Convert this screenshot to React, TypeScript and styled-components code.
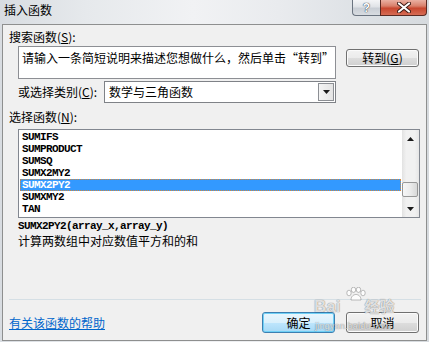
import React from "react";
import styled, { createGlobalStyle } from "styled-components";

const GlobalStyle = createGlobalStyle`
  html, body {
    margin: 0;
    padding: 0;
    background: #ffffff;
  }
  body {
    font-family: "Noto Sans CJK SC", "Liberation Sans", sans-serif;
    font-size: 12px;
    color: #000;
  }
`;

const functions = [
  "SUMIFS",
  "SUMPRODUCT",
  "SUMSQ",
  "SUMX2MY2",
  "SUMX2PY2",
  "SUMXMY2",
  "TAN",
];
const selected = "SUMX2PY2";

const Window = styled.div`
  position: relative;
  width: 429px;
  height: 342px;
  box-sizing: border-box;
  padding: 0 2px 1px 2px;
  display: flex;
  flex-direction: column;
  overflow: hidden;
  background: linear-gradient(
    90deg,
    #d8dce1 0%,
    #e6e9ec 20%,
    #f1f2f4 45%,
    #e9ebee 65%,
    #dde1e5 85%,
    #d6dade 100%
  );
`;

const TitleBar = styled.div`
  height: 24px;
  display: flex;
  align-items: flex-start;
  justify-content: space-between;
`;

const Title = styled.span`
  margin: 3px 0 0 2px;
  font-size: 12px;
  line-height: 14px;
  color: #000;
`;

const Caption = styled.div`
  display: flex;
`;

const HelpButton = styled.div`
  width: 28px;
  height: 16px;
  box-sizing: border-box;
  border: 1px solid #6b7480;
  border-top: none;
  border-right: none;
  border-radius: 0 0 0 4px;
  background: linear-gradient(#f4f5f7 0%, #e0e3e7 45%, #c9ced5 55%, #d8dce1 100%);
  display: flex;
  align-items: center;
  justify-content: center;
  color: #fff;
  font: bold 12px/14px "Liberation Sans", sans-serif;
  text-shadow: 0 0 1px #2c3440, 0 0 1px #2c3440;
`;

const CloseButton = styled.div`
  width: 47px;
  height: 16px;
  box-sizing: border-box;
  border: 1px solid #5a2a22;
  border-top: none;
  border-radius: 0 0 4px 0;
  background: linear-gradient(#eab0a2 0%, #d9806b 40%, #c8472f 55%, #d66c55 100%);
  display: flex;
  align-items: center;
  justify-content: center;
`;

const Panel = styled.div`
  position: relative;
  flex: 1;
  display: flex;
  flex-direction: column;
  box-sizing: border-box;
  border: 1px solid #8e8f8f;
  background: #f0f0f0;
  padding: 0 6px 7px 6px;
`;

const SectionLabel = styled.div<{ $top: number }>`
  margin-top: ${(p) => p.$top}px;
  line-height: 14px;
  white-space: nowrap;
`;

const SearchRow = styled.div`
  display: flex;
  align-items: flex-start;
  gap: 10px;
  margin: 2px 0 0 9px;
`;

const SearchBox = styled.div`
  width: 318px;
  height: 33px;
  box-sizing: border-box;
  border: 1px solid #8d8f94;
  background: #fff;
  padding: 4px 0 0 3px;
  line-height: 14px;
  white-space: nowrap;
  overflow: hidden;
`;

const Button = styled.button<{ $default?: boolean; $height?: number; $top?: number }>`
  width: 73px;
  height: ${(p) => p.$height ?? 21}px;
  margin-top: ${(p) => p.$top ?? 0}px;
  box-sizing: border-box;
  padding: 0;
  border: 1px solid ${(p) => (p.$default ? "#3c7fb1" : "#707070")};
  border-radius: 3px;
  background: ${(p) =>
    p.$default
      ? "linear-gradient(#eaf6fd 0%, #d9f0fc 50%, #bee6fd 51%, #a7d9f5 100%)"
      : "linear-gradient(#f2f2f2 0%, #ebebeb 50%, #dddddd 51%, #cfcfcf 100%)"};
  box-shadow: inset 0 0 0 1px ${(p) => (p.$default ? "#6fd0f6" : "#fbfbfb")};
  font: 12px/14px "Noto Sans CJK SC", "Liberation Sans", sans-serif;
  color: #000;
  display: flex;
  align-items: center;
  justify-content: center;
`;

const CategoryRow = styled.div`
  display: flex;
  align-items: center;
  margin: 2px 0 0 9px;
`;

const CategoryLabel = styled.span`
  width: 86px;
  line-height: 14px;
  white-space: nowrap;
`;

const Select = styled.div`
  width: 232px;
  height: 22px;
  box-sizing: border-box;
  border: 1px solid #7f8287;
  background: #fff;
  display: flex;
  align-items: stretch;
  padding: 1px;
`;

const SelectValue = styled.span`
  flex: 1;
  padding-left: 3px;
  line-height: 18px;
`;

const DropButton = styled.span`
  width: 16px;
  box-sizing: border-box;
  border: 1px solid #8c8f94;
  background: linear-gradient(90deg, #f4f4f4, #e4e4e4);
  display: flex;
  align-items: center;
  justify-content: center;
`;

const ListBox = styled.div`
  margin: 5px 0 0 9px;
  width: 402px;
  height: 89px;
  box-sizing: border-box;
  border: 1px solid #828790;
  background: #fff;
  display: flex;
`;

const Rows = styled.div`
  flex: 1;
  padding: 1px;
`;

const Row = styled.div<{ $active?: boolean }>`
  height: 12px;
  line-height: 12px;
  padding-left: 2px;
  font-family: "Liberation Mono", monospace;
  font-size: 11px;
  font-weight: bold;
  letter-spacing: -0.6px;
  white-space: nowrap;
  color: ${(p) => (p.$active ? "#fff" : "#000")};
  background: ${(p) => (p.$active ? "#3399ff" : "transparent")};
  outline: ${(p) => (p.$active ? "1px dotted #d2873a" : "none")};
  outline-offset: -1px;
`;

const ScrollBar = styled.div`
  width: 17px;
  display: flex;
  flex-direction: column;
  background: linear-gradient(90deg, #e2e2e2 0%, #f1f1f1 25%, #f1f1f1 75%, #e6e6e6 100%);
`;

const ScrollArrow = styled.div`
  height: 17px;
  display: flex;
  align-items: center;
  justify-content: center;
`;

const ScrollTrack = styled.div`
  flex: 1;
`;

const Thumb = styled.div<{ $offset: number }>`
  margin: ${(p) => p.$offset}px 1px 0 0;
  height: 15px;
  box-sizing: border-box;
  border: 1px solid #979797;
  border-radius: 2px;
  background: linear-gradient(90deg, #f6f6f6 0%, #ececec 50%, #d8d8d8 100%);
`;

const Syntax = styled.div`
  margin: 2px 0 0 9px;
  line-height: 12px;
  font-family: "Liberation Mono", monospace;
  font-size: 11px;
  font-weight: bold;
  letter-spacing: -0.6px;
  white-space: nowrap;
`;

const Description = styled.div`
  margin: 2px 0 0 9px;
  line-height: 14px;
  white-space: nowrap;
`;

const Separator = styled.div`
  margin-top: auto;
  margin-bottom: 12px;
  width: 412px;
  height: 1px;
  background: #d5dfe5;
`;

const Footer = styled.div`
  display: flex;
  align-items: center;
  gap: 11px;
  padding-right: 1px;
`;

const HelpLink = styled.a`
  margin-right: auto;
  color: #0066cc;
  text-decoration: underline;
  line-height: 14px;
  cursor: pointer;
`;

const Watermark = styled.div`
  position: absolute;
  left: 309px;
  top: 262px;
  width: 92px;
  height: 44px;
  pointer-events: none;
  color: rgba(255, 255, 255, 0.8);
  text-shadow: 0 0 1px rgba(0, 0, 0, 0.4), 0 0 1px rgba(0, 0, 0, 0.3);
`;

const MarkBrand = styled.div`
  position: absolute;
  top: 10px;
  left: 2px;
  font: bold 17px/18px "Liberation Sans", sans-serif;
  white-space: nowrap;
`;

const MarkCn = styled.span`
  margin-left: 24px;
  font: bold 15px/18px "Noto Sans CJK SC", sans-serif;
`;

const MarkUrl = styled.div`
  position: absolute;
  top: 34px;
  left: 3px;
  font: 9px/10px "Liberation Sans", sans-serif;
  letter-spacing: 0.2px;
  white-space: nowrap;
`;

const MarkPaw = styled.svg`
  position: absolute;
  left: 33px;
  top: 0;
`;

function Triangle({ up }: { up?: boolean }) {
  return (
    <svg width="7" height="4" viewBox="0 0 7 4">
      <polygon points={up ? "0,4 7,4 3.5,0" : "0,0 7,0 3.5,4"} fill="#1a1a1a" />
    </svg>
  );
}

export default function App() {
  return (
    <>
      <GlobalStyle />
      <Window>
        <TitleBar>
          <Title>插入函数</Title>
          <Caption>
            <HelpButton>?</HelpButton>
            <CloseButton>
              <svg width="14" height="11" viewBox="0 0 14 11">
                <path
                  d="M2 1.5 L12 9.5 M12 1.5 L2 9.5"
                  stroke="#3b1a14"
                  strokeWidth="4"
                  strokeLinecap="round"
                />
                <path
                  d="M2 1.5 L12 9.5 M12 1.5 L2 9.5"
                  stroke="#ffffff"
                  strokeWidth="2.2"
                  strokeLinecap="round"
                />
              </svg>
            </CloseButton>
          </Caption>
        </TitleBar>
        <Panel>
          <SectionLabel $top={5}>
            搜索函数(<u>S</u>):
          </SectionLabel>
          <SearchRow>
            <SearchBox>请输入一条简短说明来描述您想做什么，然后单击“转到”</SearchBox>
            <Button $height={18} $top={3}>
              转到(<u>G</u>)
            </Button>
          </SearchRow>
          <CategoryRow>
            <CategoryLabel>
              或选择类别(<u>C</u>):
            </CategoryLabel>
            <Select>
              <SelectValue>数学与三角函数</SelectValue>
              <DropButton>
                <Triangle />
              </DropButton>
            </Select>
          </CategoryRow>
          <SectionLabel $top={7}>
            选择函数(<u>N</u>):
          </SectionLabel>
          <ListBox>
            <Rows>
              {functions.map((name) => (
                <Row key={name} $active={name === selected}>
                  {name}
                </Row>
              ))}
            </Rows>
            <ScrollBar>
              <ScrollArrow>
                <Triangle up />
              </ScrollArrow>
              <ScrollTrack>
                <Thumb $offset={35} />
              </ScrollTrack>
              <ScrollArrow>
                <Triangle />
              </ScrollArrow>
            </ScrollBar>
          </ListBox>
          <Syntax>SUMX2PY2(array_x,array_y)</Syntax>
          <Description>计算两数组中对应数值平方和的和</Description>
          <Separator />
          <Footer>
            <HelpLink>有关该函数的帮助</HelpLink>
            <Button $default>确定</Button>
            <Button>取消</Button>
          </Footer>
          <Watermark>
            <MarkPaw width="22" height="14" viewBox="0 0 22 14">
              <g fill="rgba(255,255,255,0.85)" stroke="rgba(0,0,0,0.3)" strokeWidth="0.8">
                <ellipse cx="4" cy="6" rx="2.2" ry="2.8" />
                <ellipse cx="8.5" cy="2.8" rx="2.2" ry="2.6" />
                <ellipse cx="13.5" cy="2.8" rx="2.2" ry="2.6" />
                <ellipse cx="18" cy="6" rx="2.2" ry="2.8" />
                <path d="M6 13 C6 9 9 7.5 11 7.5 C13 7.5 16 9 16 13 Z" />
              </g>
            </MarkPaw>
            <MarkBrand>
              Bai<MarkCn>经验</MarkCn>
            </MarkBrand>
            <MarkUrl>jingyan.baidu.com</MarkUrl>
          </Watermark>
        </Panel>
      </Window>
    </>
  );
}
